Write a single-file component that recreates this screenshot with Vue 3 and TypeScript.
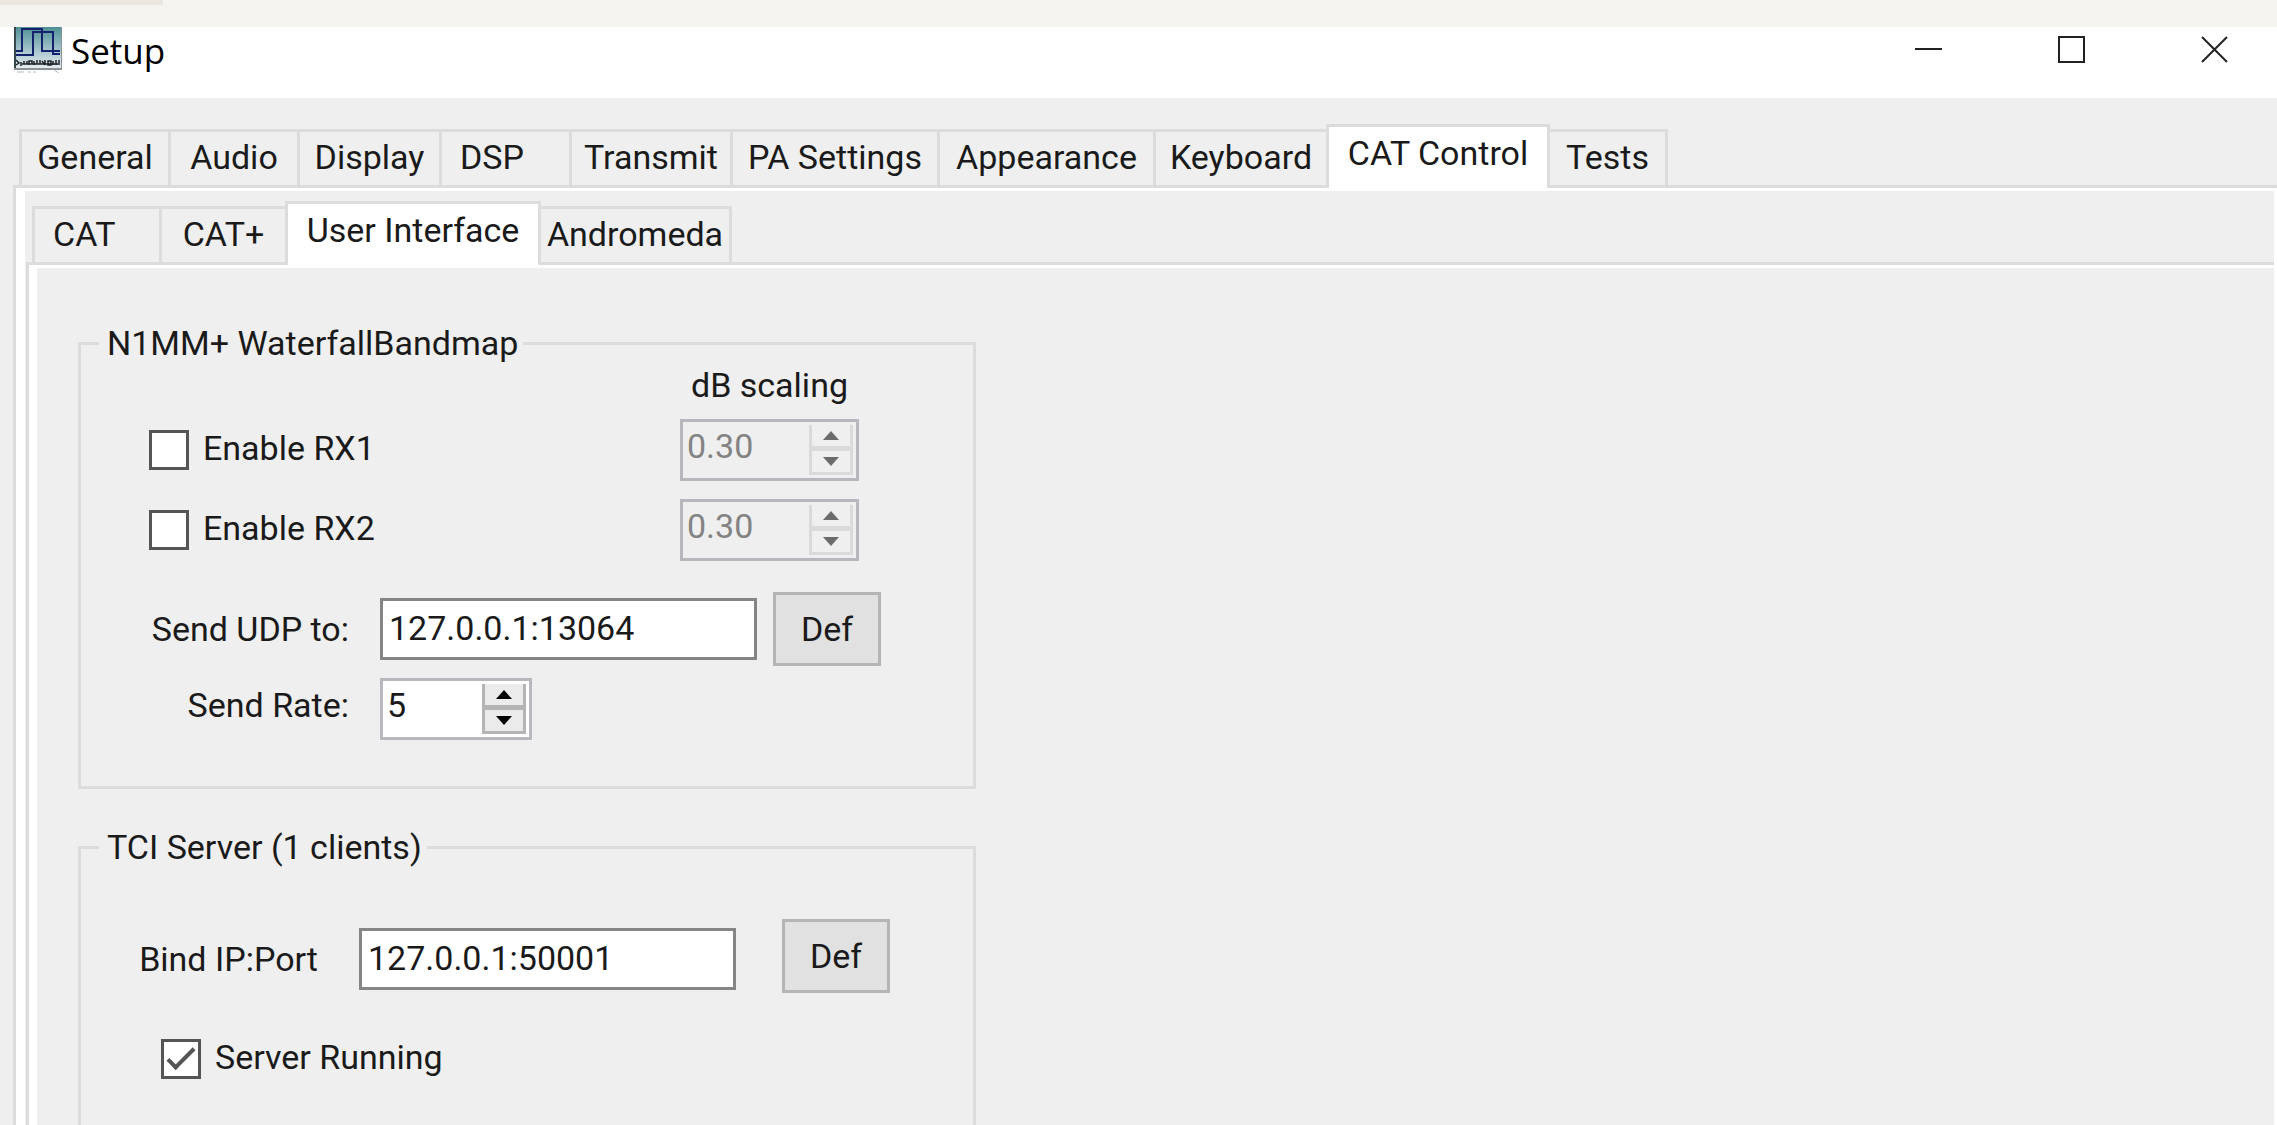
<script setup lang="ts">
import { ref } from 'vue'

interface Tab {
  name: string
  short?: boolean
}

const mainTabs: Tab[] = [
  { name: 'General' },
  { name: 'Audio' },
  { name: 'Display' },
  { name: 'DSP', short: true },
  { name: 'Transmit' },
  { name: 'PA Settings' },
  { name: 'Appearance' },
  { name: 'Keyboard' },
  { name: 'CAT Control' },
  { name: 'Tests' },
]
const subTabs: Tab[] = [
  { name: 'CAT', short: true },
  { name: 'CAT+' },
  { name: 'User Interface' },
  { name: 'Andromeda' },
]

const activeMain = ref('CAT Control')
const activeSub = ref('User Interface')

const receivers = ref([
  { id: 'rx1', label: 'Enable RX1', enabled: false, scaling: '0.30' },
  { id: 'rx2', label: 'Enable RX2', enabled: false, scaling: '0.30' },
])

const udpAddress = ref('127.0.0.1:13064')
const sendRate = ref('5')
const bindAddress = ref('127.0.0.1:50001')
const serverRunning = ref(true)

function stepRate(delta: number) {
  sendRate.value = String(Math.max(1, Number(sendRate.value) + delta))
}
</script>

<template>
  <div class="window">
    <div class="backdrop"><div class="backdrop-tab"></div></div>

    <header class="titlebar">
      <svg class="app-icon" viewBox="0 0 48 46" aria-hidden="true">
        <defs>
          <linearGradient id="sky" x1="0" y1="0" x2="0" y2="1">
            <stop offset="0" stop-color="#4f8f96" />
            <stop offset="0.55" stop-color="#a3c3cb" />
            <stop offset="1" stop-color="#e6ecf0" />
          </linearGradient>
        </defs>
        <rect x="0" y="0" width="48" height="43" fill="#8b9295" />
        <rect x="2" y="0" width="45" height="41" fill="url(#sky)" />
        <path d="M1 0V41" stroke="#33474d" stroke-width="2" />
        <path d="M2 24H8V2H28V24H46" fill="none" stroke="#14226e" stroke-width="2" />
        <path d="M2 28H19V5H39V27H46" fill="none" stroke="#14226e" stroke-width="2" />
        <path d="M2 33L5 36L2 38M7 35V39M10 34V37H13V34M15 38V34H18V37M20 34V38M23 33V37H26V33M28 34L31 38M31 33V38M34 34H37V38H34ZM39 38V34M42 33V38M45 33V38M8 37H44" fill="none" stroke="#1d2429" stroke-width="1.5" />
        <path d="M3 45H10M14 45H17M19 45H22M40 43L45 46" stroke="#b9b9b9" stroke-width="1" />
      </svg>
      <h1 class="title">Setup</h1>
      <div class="window-buttons">
        <button type="button" aria-label="Minimize">
          <svg viewBox="0 0 27 27"><path d="M0 13H27" /></svg>
        </button>
        <button type="button" aria-label="Maximize">
          <svg viewBox="0 0 27 27"><rect x="1" y="1" width="25" height="25" /></svg>
        </button>
        <button type="button" aria-label="Close">
          <svg viewBox="0 0 27 27"><path d="M1 1L26 26M26 1L1 26" /></svg>
        </button>
      </div>
    </header>

    <main class="body">
      <nav class="tabs tabs-main" role="tablist" aria-label="Setup pages">
        <button
          v-for="tab in mainTabs"
          :key="tab.name"
          type="button"
          role="tab"
          class="tab"
          :class="{ active: tab.name === activeMain, short: tab.short }"
          :aria-selected="tab.name === activeMain"
          @click="activeMain = tab.name"
        >{{ tab.name }}</button>
      </nav>

      <div class="panel panel-main">
        <div class="panel-inner">
          <nav class="tabs tabs-sub" role="tablist" aria-label="CAT Control pages">
            <button
              v-for="tab in subTabs"
              :key="tab.name"
              type="button"
              role="tab"
              class="tab"
              :class="{ active: tab.name === activeSub, short: tab.short }"
              :aria-selected="tab.name === activeSub"
              @click="activeSub = tab.name"
            >{{ tab.name }}</button>
          </nav>

          <div class="panel panel-sub">
            <div class="panel-inner content">
              <fieldset class="group">
                <legend>N1MM+ WaterfallBandmap</legend>
                <div class="scaling-title">dB scaling</div>
                <div v-for="rx in receivers" :key="rx.id" class="receiver">
                  <label class="check">
                    <input v-model="rx.enabled" type="checkbox" />
                    <span>{{ rx.label }}</span>
                  </label>
                  <div class="spin spin-wide disabled">
                    <input v-model="rx.scaling" type="text" disabled :aria-label="rx.label + ' dB scaling'" />
                    <div class="steps">
                      <button type="button" disabled aria-label="Increase">
                        <svg viewBox="0 0 16 9"><path d="M0 9L8 0L16 9Z" /></svg>
                      </button>
                      <button type="button" disabled aria-label="Decrease">
                        <svg viewBox="0 0 16 9"><path d="M0 0L8 9L16 0Z" /></svg>
                      </button>
                    </div>
                  </div>
                </div>
                <div class="row row-udp">
                  <label for="udp">Send UDP to:</label>
                  <input id="udp" v-model="udpAddress" class="textbox" type="text" />
                  <button type="button" class="push">Def</button>
                </div>
                <div class="row row-rate">
                  <label for="rate">Send Rate:</label>
                  <div class="spin">
                    <input id="rate" v-model="sendRate" type="text" />
                    <div class="steps">
                      <button type="button" aria-label="Increase" @click="stepRate(1)">
                        <svg viewBox="0 0 16 9"><path d="M0 9L8 0L16 9Z" /></svg>
                      </button>
                      <button type="button" aria-label="Decrease" @click="stepRate(-1)">
                        <svg viewBox="0 0 16 9"><path d="M0 0L8 9L16 0Z" /></svg>
                      </button>
                    </div>
                  </div>
                </div>
              </fieldset>

              <fieldset class="group group-server">
                <legend>TCI Server (1 clients)</legend>
                <div class="row row-bind">
                  <label for="bind">Bind IP:Port</label>
                  <input id="bind" v-model="bindAddress" class="textbox" type="text" />
                  <button type="button" class="push">Def</button>
                </div>
                <label class="check check-server">
                  <input v-model="serverRunning" type="checkbox" />
                  <span>Server Running</span>
                </label>
              </fieldset>
            </div>
          </div>
        </div>
      </div>
    </main>
  </div>
</template>

<style>
body {
  margin: 0;
  background: #efefef;
}
</style>

<style scoped>
.window {
  display: flex;
  flex-direction: column;
  min-height: 100vh;
  background: #efefef;
  color: #1a1a1a;
  font-family: Roboto, "Liberation Sans", Arial, sans-serif;
  font-size: 34px;
  line-height: 44px;
}
*,
*::before {
  box-sizing: border-box;
}
button,
input {
  margin: 0;
  padding: 0;
  border: 0;
  border-radius: 0;
  font: inherit;
  color: inherit;
  background: none;
}
.backdrop {
  height: 27px;
  background: #f5f4f0;
}
.backdrop-tab {
  width: 163px;
  height: 5px;
  background: #ebe6df;
}

.titlebar {
  display: flex;
  align-items: flex-start;
  height: 71px;
  padding-left: 14px;
  background: #fff;
}
.app-icon {
  width: 48px;
  height: 46px;
}
.title {
  flex: 1;
  margin: 0;
  padding-left: 9px;
  color: #000;
  font-family: "Open Sans", "Noto Sans", sans-serif;
  font-size: 35px;
  font-weight: 400;
  line-height: 48px;
}
.window-buttons {
  display: flex;
  gap: 18px;
}
.window-buttons button {
  display: flex;
  align-items: center;
  justify-content: center;
  width: 125px;
  height: 45px;
}
.window-buttons svg {
  width: 27px;
  height: 27px;
  fill: none;
  stroke: #222;
  stroke-width: 2;
}

.body {
  display: flex;
  flex: 1;
  flex-direction: column;
  padding-top: 26px;
}
.tabs {
  display: grid;
  align-items: end;
  height: 61px;
}
.tabs-main {
  grid-template-columns: 149px 129px 142px 130px 161px 207px 216px 173px 224px 118px;
  margin-left: 19px;
}
.tabs-sub {
  grid-template-columns: 127px 126px 256px 191px;
  margin-left: 7px;
}
.tab {
  height: 56px;
  padding: 3px 0 6px;
  border: solid #dcdcdc;
  border-width: 3px 0 0 3px;
  line-height: 44px;
  white-space: nowrap;
}
.tab.short {
  padding-left: 18px;
  text-align: left;
}
.tab.active {
  position: relative;
  height: 64px;
  margin-bottom: -3px;
  padding: 4px 0 13px;
  border-right-width: 3px;
  background: #fff;
}
.tab.active + .tab {
  border-left-width: 0;
}
.tab:last-child {
  border-right-width: 3px;
}

.panel {
  display: flex;
  flex: 1;
  flex-direction: column;
  border: solid #dcdcdc;
  border-width: 3px 0 0 3px;
}
.panel-main {
  margin-left: 13px;
}
.panel-sub {
  margin-left: 1px;
}
.panel-inner {
  display: flex;
  flex: 1;
  flex-direction: column;
  border: solid #fff;
  border-width: 3px 0 0 8px;
}
.panel-main > .panel-inner {
  padding-top: 10px;
  border-width: 3px 3px 0 9px;
}
.content {
  gap: 36px;
  padding: 53px 0 0 41px;
}

.group {
  width: 898px;
  margin: 0;
  padding: 0 0 46px;
  border: 3px solid #dcdcdc;
}
.group legend {
  height: 44px;
  margin-left: 18px;
  padding: 0 5px 0 8px;
}
.group-server {
  flex: 1;
  padding-bottom: 40px;
  border-bottom: 0;
}
.scaling-title {
  width: 179px;
  margin-left: 599px;
  line-height: 40px;
  text-align: center;
  white-space: nowrap;
}
.receiver {
  display: flex;
  align-items: center;
  justify-content: space-between;
  margin-top: 18px;
  padding: 0 114px 0 68px;
}
.scaling-title + .receiver {
  margin-top: 14px;
}

.check {
  display: flex;
  align-items: center;
  gap: 14px;
}
.check span {
  padding-bottom: 4px;
}
.check input {
  display: grid;
  place-content: center;
  width: 40px;
  height: 40px;
  border: 3px solid #555;
  appearance: none;
  background: #fff;
}
.check input:checked::before {
  width: 28px;
  height: 13px;
  border: solid #555;
  border-width: 0 0 4px 4px;
  content: "";
  transform: translateY(-4px) rotate(-45deg);
}
.check-server {
  margin: 42px 0 0 80px;
}

.row {
  display: flex;
  align-items: center;
}
.row label {
  text-align: right;
}
.row-udp {
  margin-top: 31px;
}
.row-udp label,
.row-rate label {
  width: 268px;
  margin-right: 31px;
}
.row-udp .push {
  margin-left: 16px;
}
.row-rate {
  align-items: flex-start;
  margin-top: 12px;
}
.row-rate label {
  line-height: 54px;
}
.row-bind {
  padding-top: 50px;
}
.row-bind label {
  width: 237px;
  margin: 6px 41px 0 0;
}
.row-bind .textbox {
  margin-top: 6px;
}
.row-bind .push {
  margin-left: 46px;
}

.textbox {
  width: 377px;
  height: 62px;
  padding: 0 6px 2px;
  border: 3px solid #858585;
  background: #fff;
}
.push {
  width: 108px;
  height: 74px;
  border: 3px solid #b5b5b5;
  background: #e1e1e1;
}

.spin {
  display: flex;
  width: 152px;
  height: 62px;
  padding: 3px;
  border: 3px solid #b6b8be;
  background: #fff;
}
.spin-wide {
  width: 179px;
}
.spin input {
  flex: 1;
  min-width: 0;
  padding: 0 0 8px 1px;
}
.steps {
  display: flex;
  flex-direction: column;
  width: 44px;
}
.steps button {
  display: flex;
  flex: 1;
  align-items: center;
  justify-content: center;
  border: solid #b4b4b4;
  border-width: 0 3px 3px;
  background: #ebebeb;
}
.steps button + button {
  border-top-width: 2px;
}
.steps svg {
  width: 16px;
  height: 9px;
  fill: #000;
}
.spin.disabled {
  background: #efefef;
  color: #838383;
}
.disabled .steps button {
  border-color: #dadada;
  background: #efefef;
}
.disabled .steps svg {
  fill: #6b6b6b;
}
</style>
